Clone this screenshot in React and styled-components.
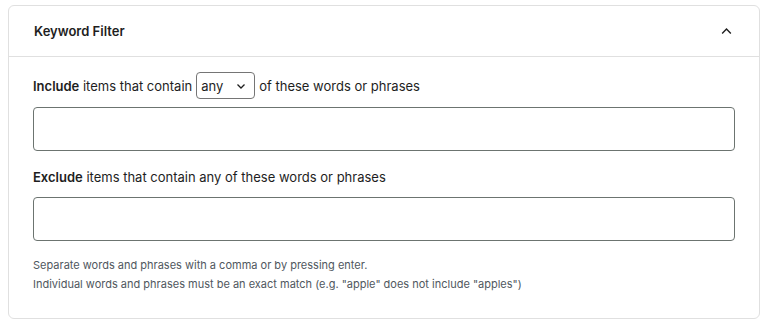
import React from 'react';
import styled, { createGlobalStyle } from 'styled-components';

const GlobalStyle = createGlobalStyle`
  * { box-sizing: border-box; }
  body {
    margin: 0;
    background: #ffffff;
    font-family: Inter, "Noto Sans", sans-serif;
    color: #1e1e1e;
  }
`;

const Page = styled.div`
  padding: 5px 11px 8px 8px;
`;

const Panel = styled.section`
  border: 1px solid #e0e0e0;
  border-radius: 6px;
  background: #fff;
`;

const Header = styled.div`
  display: flex;
  align-items: center;
  justify-content: space-between;
  height: 51px;
  padding: 0 26px 0 25px;
  border-bottom: 1px solid #e0e0e0;
`;

const Title = styled.h2`
  margin: 0;
  font-size: 13px;
  font-weight: 600;
  color: #1e1e1e;
`;

const Toggle = styled.button`
  border: 0;
  background: none;
  padding: 0;
  display: flex;
  color: #1e1e1e;
`;

const Body = styled.div`
  padding: 15px 24px 24px 24px;
  display: flex;
  flex-direction: column;
`;

const Label = styled.div`
  display: flex;
  align-items: center;
  gap: 4px;
  font-size: 13px;
  color: #1e1e1e;
  height: 27px;
  margin-bottom: ${p => p.$gap}px;
  b { font-weight: 600; }
`;

const Select = styled.div`
  display: inline-flex;
  align-items: center;
  justify-content: space-between;
  width: 59px;
  height: 27px;
  padding: 0 7px 0 4px;
  border: 1px solid #757575;
  border-radius: 4px;
  font-size: 13px;
`;

const Field = styled.div`
  height: 44px;
  border: 1px solid #6c7470;
  border-radius: 4px;
  margin-bottom: ${p => p.$gap}px;
`;

const Help = styled.p`
  margin: 0;
  font-size: 11px;
  line-height: 19px;
  color: #50575e;
`;

const Chevron = ({ up, size = 12 }) => (
  <svg width={size} height={size} viewBox="0 0 12 12" fill="none">
    <path
      d={up ? 'M2 7.8 6 3.8l4 4' : 'M2.5 4.5 6 8l3.5-3.5'}
      stroke="#1e1e1e"
      strokeWidth="1.3"
    />
  </svg>
);

export default function App() {
  return (
    <>
      <GlobalStyle />
      <Page>
        <Panel>
          <Header>
            <Title>Keyword Filter</Title>
            <Toggle aria-label="Collapse">
              <Chevron up size={13} />
            </Toggle>
          </Header>
          <Body>
            <Label $gap={8}>
              <span><b>Include</b> items that contain</span>
              <Select>
                any
                <Chevron />
              </Select>
              <span>of these words or phrases</span>
            </Label>
            <Field $gap={12} />
            <Label $gap={7}>
              <span><b>Exclude</b> items that contain any of these words or phrases</span>
            </Label>
            <Field $gap={15} />
            <Help>Separate words and phrases with a comma or by pressing enter.</Help>
            <Help>Individual words and phrases must be an exact match (e.g. "apple" does not include "apples")</Help>
          </Body>
        </Panel>
      </Page>
    </>
  );
}
